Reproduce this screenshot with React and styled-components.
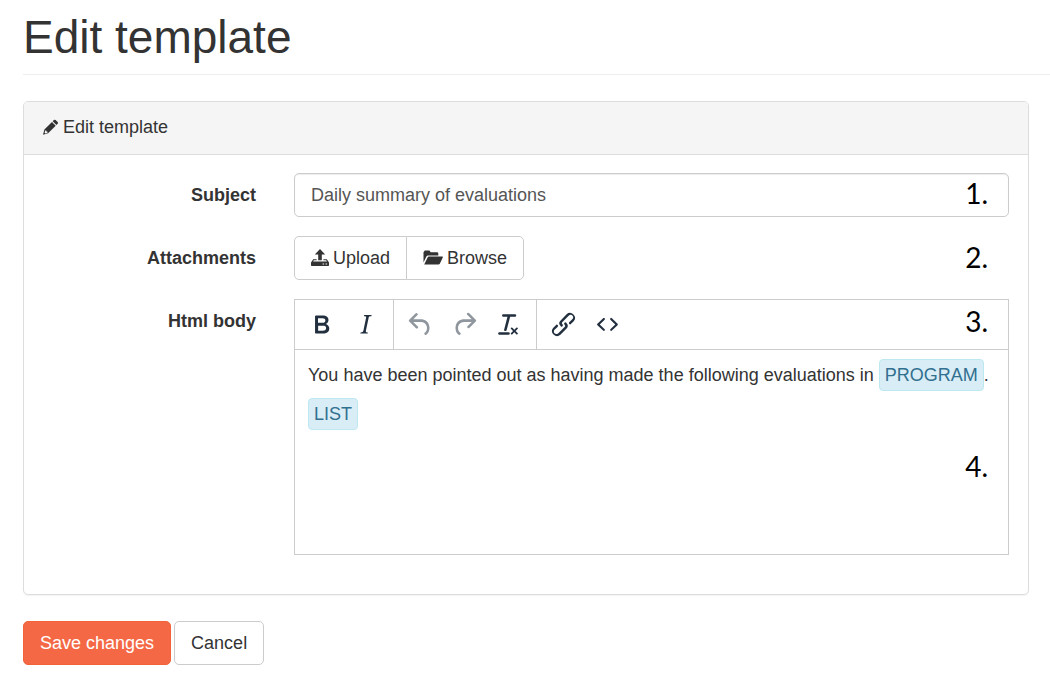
import React from 'react';
import styled, { createGlobalStyle } from 'styled-components';

const GlobalStyle = createGlobalStyle`
  *, *::before, *::after { box-sizing: border-box; }
  body {
    margin: 0;
    background: #fff;
    color: #333;
    font: 18px/26px "Liberation Sans", Arial, sans-serif;
  }
`;

const Page = styled.div`
  padding: 12px 0 28px 23px;
`;

const PageHeader = styled.header`
  padding-bottom: 12px;
  margin-bottom: 26px;
  border-bottom: 1px solid #eee;
`;

const Title = styled.h1`
  margin: 0;
  font-size: 46px;
  font-weight: 400;
  line-height: 50px;
`;

const Form = styled.form`
  margin-right: 21px;
`;

const Panel = styled.section`
  border: 1px solid #ddd;
  border-radius: 5px;
  box-shadow: 0 1px 1px rgba(0, 0, 0, 0.05);
  margin-bottom: 26px;
`;

const PanelHeading = styled.h2`
  display: flex;
  align-items: center;
  gap: 5px;
  margin: 0;
  padding: 12px 19px 14px;
  background: #f5f5f5;
  border-bottom: 1px solid #ddd;
  border-radius: 4px 4px 0 0;
  font-size: 18px;
  font-weight: 400;
  line-height: 26px;
`;

const PanelBody = styled.div`
  display: flex;
  flex-direction: column;
  gap: 19px;
  padding: 18px 19px 39px;
`;

const Row = styled.div`
  display: grid;
  grid-template-columns: 213px minmax(0, 1fr);
  column-gap: 38px;
  align-items: start;
`;

const Label = styled.label`
  padding-top: 9px;
  font-weight: 700;
  text-align: right;
`;

const Field = styled.div`
  position: relative;
`;

const Marker = styled.span`
  position: absolute;
  top: ${(p) => p.$top}px;
  right: 21px;
  color: #000;
  font: 28px/34px Lato, sans-serif;
  pointer-events: none;
`;

const TextInput = styled.input`
  display: block;
  width: 100%;
  height: 44px;
  padding: 8px 16px;
  border: 1px solid #ccc;
  border-radius: 5px;
  box-shadow: inset 0 1px 1px rgba(0, 0, 0, 0.075);
  color: #555;
  font: inherit;
`;

const Glyph = styled.svg`
  flex: none;
  width: ${(p) => p.$width}px;
  height: 18px;
  fill: currentColor;
`;

const Button = styled.button`
  display: inline-flex;
  align-items: center;
  justify-content: center;
  gap: 4px;
  height: 44px;
  padding: 0 16px;
  border: 1px solid ${(p) => (p.$primary ? '#f26339' : '#ccc')};
  border-radius: 5px;
  background: ${(p) => (p.$primary ? '#f46845' : '#fff')};
  color: ${(p) => (p.$primary ? '#fff' : '#333')};
  font: inherit;
  cursor: pointer;
`;

const ButtonGroup = styled.div`
  display: flex;

  ${Button}:not(:first-child) {
    margin-left: -1px;
    border-top-left-radius: 0;
    border-bottom-left-radius: 0;
  }

  ${Button}:not(:last-child) {
    border-top-right-radius: 0;
    border-bottom-right-radius: 0;
  }
`;

const Editor = styled.div`
  border: 1px solid #ccc;
`;

const Toolbar = styled.div`
  display: flex;
  height: 50px;
  border-bottom: 1px solid #ccc;
`;

const ToolGroup = styled.div`
  display: flex;
  align-items: center;
  padding: 0 6px 0 4px;

  & + & {
    border-left: 1px solid #ccc;
  }
`;

const ToolButton = styled.button`
  display: flex;
  align-items: center;
  justify-content: center;
  width: 44px;
  height: 44px;
  padding: 0;
  border: 0;
  background: none;
  color: #222f3e;
  opacity: ${(p) => (p.disabled ? 0.5 : 1)};

  svg {
    width: 31px;
    height: 31px;
    fill: currentColor;
  }
`;

const Content = styled.div`
  height: 204px;
  padding: 6px 13px;
  outline: none;
`;

const Paragraph = styled.p`
  margin: 0;
  line-height: 39px;
`;

const Tag = styled.span`
  display: inline-block;
  padding: 2px 5px;
  border: 1px solid #bce8f1;
  border-radius: 4px;
  background: #d9edf7;
  color: #31708f;
  line-height: 26px;
`;

const Actions = styled.div`
  display: flex;
  gap: 3px;
`;

const ICONS = {
  bold: 'M7.8 19c-.3 0-.5 0-.6-.2l-.2-.5V5.7c0-.2 0-.4.2-.5l.6-.2h5c1.5 0 2.7.3 3.5 1 .7.6 1.1 1.4 1.1 2.5a3 3 0 0 1-.6 1.9c-.4.6-1 1-1.6 1.2.4.1.9.3 1.3.6s.8.7 1 1.2c.4.4.5 1 .5 1.6 0 1.3-.4 2.3-1.3 3-.8.7-2.1 1-3.8 1H7.8zm5-8.3c.6 0 1.2-.1 1.6-.5.4-.3.6-.7.6-1.3 0-1.1-.8-1.7-2.3-1.7H9.3v3.5h3.4zm.5 6c.7 0 1.3-.1 1.7-.4.4-.4.6-.9.6-1.5s-.2-1-.7-1.4c-.4-.3-1-.4-2-.4H9.4v3.8h4z',
  italic: 'M16.7 4.7l-.1.9h-.3c-.6 0-1 0-1.4.3-.3.3-.4.6-.5 1.1l-2.1 9.8v.6c0 .5.4.8 1.4.8h.2l-.2.8H8l.2-.8h.2c1.1 0 1.8-.5 2-1.5l2-9.8.1-.5c0-.6-.4-.8-1.4-.8h-.3l.2-.9h5.8z',
  undo: 'M6.4 8H12c3.7 0 6.2 2 6.8 5.1.6 2.7-.4 5.6-2.3 6.8a1 1 0 0 1-1-1.8c1.1-.6 1.8-2.7 1.4-4.6-.5-2.1-2.1-3.5-4.9-3.5H6.4l3.3 3.3a1 1 0 1 1-1.4 1.4l-5-5a1 1 0 0 1 0-1.4l5-5a1 1 0 0 1 1.4 1.4L6.4 8z',
  redo: 'M17.6 10H12c-2.8 0-4.4 1.4-4.9 3.5-.4 2 .3 4 1.4 4.6a1 1 0 1 1-1 1.8c-2-1.2-2.9-4.1-2.3-6.8.6-3 3-5.1 6.8-5.1h5.6l-3.3-3.3a1 1 0 1 1 1.4-1.4l5 5a1 1 0 0 1 0 1.4l-5 5a1 1 0 0 1-1.4-1.4l3.3-3.3z',
  clear: 'M13.2 6a1 1 0 0 1 0 .2l-2.6 10a1 1 0 0 1-1 .8h-.2a.8.8 0 0 1-.8-1l2.6-10H8a1 1 0 1 1 0-2h9a1 1 0 0 1 0 2h-3.8zM5 18h7a1 1 0 0 1 0 2H5a1 1 0 0 1 0-2zm13 1.5L16.5 18 15 19.5a.7.7 0 0 1-1-1l1.5-1.5-1.5-1.5a.7.7 0 0 1 1-1l1.5 1.5 1.5-1.5a.7.7 0 0 1 1 1L17.5 17l1.5 1.5a.7.7 0 0 1-1 1z',
  link: 'M6.2 12.3a1 1 0 0 1 1.4 1.4l-2.1 2a2 2 0 1 0 2.7 2.8l4.8-4.8a1 1 0 0 0 0-1.4 1 1 0 1 1 1.4-1.3 2.9 2.9 0 0 1 0 4L9.6 20a3.9 3.9 0 0 1-5.5-5.5l2-2zm11.6-.6a1 1 0 0 1-1.4-1.4l2-2a2 2 0 1 0-2.6-2.8L11 10.3a1 1 0 0 0 0 1.4A1 1 0 1 1 9.6 13a2.9 2.9 0 0 1 0-4L14.4 4a3.9 3.9 0 0 1 5.5 5.5l-2 2z',
  code: 'M9.8 15.7c.3.3.3.8 0 1-.3.4-.9.4-1.2 0l-4.4-4.1a.8.8 0 0 1 0-1.2l4.4-4.2c.3-.3.9-.3 1.2 0 .3.3.3.8 0 1.1L6 12l3.8 3.7zM14.2 15.7c-.3.3-.3.8 0 1 .4.4.9.4 1.2 0l4.4-4.1c.3-.3.3-.8 0-1.2l-4.4-4.2a.8.8 0 0 0-1.2 0c-.3.3-.3.8 0 1.1L18 12l-3.8 3.7z',
};

const TOOLS = [
  [
    { icon: 'bold', label: 'Bold' },
    { icon: 'italic', label: 'Italic' },
  ],
  [
    { icon: 'undo', label: 'Undo', disabled: true },
    { icon: 'redo', label: 'Redo', disabled: true },
    { icon: 'clear', label: 'Clear formatting' },
  ],
  [
    { icon: 'link', label: 'Insert link' },
    { icon: 'code', label: 'Source code' },
  ],
];

const PencilIcon = () => (
  <Glyph $width={15} viewBox="0 0 15 18" aria-hidden="true">
    <path d="M10.9 2.1a1.2 1.2 0 0 1 1.7 0l2 2a1.2 1.2 0 0 1 0 1.7l-1.2 1.2-3.7-3.7z" />
    <path
      fillRule="evenodd"
      d="M9 4l3.7 3.7-7.6 7.6L0 16.7l1.4-5.1zM2.2 12.5l-.6 2.3.7.6 2.2-.6.1-1.1-1.2-.1-.1-1.2z"
    />
  </Glyph>
);

const UploadIcon = () => (
  <Glyph $width={18} viewBox="0 0 18 18" aria-hidden="true">
    <path d="M9 0l5.2 5.6h-3.4v5.6H7.2V5.6H3.8z" />
    <path
      fillRule="evenodd"
      d="M2.2 10.2h3.4v1H2.8l-.7 1.4h13.8l-.7-1.4h-2.8v-1h3.4l2.2 3.2v2.9a.7.7 0 0 1-.7.7H.7a.7.7 0 0 1-.7-.7v-2.9zM11.6 14.4v1.2h1.5v-1.2zM14.6 14.4v1.2h1.5v-1.2z"
    />
  </Glyph>
);

const FolderIcon = () => (
  <Glyph $width={20} viewBox="0 0 20 18" aria-hidden="true">
    <path d="M.5 13.6V3.2L1.8 1.4h4.6l1.3 1.8h6.4a1.2 1.2 0 0 1 1.2 1.2v2H5.2a2 2 0 0 0-1.8 1.1z" />
    <path d="M5.8 7.6h13.4c.5 0 .8.4.6.9l-3 6.3a1.5 1.5 0 0 1-1.3.8H1.2l3.4-7.2a1.4 1.4 0 0 1 1.2-.8z" />
  </Glyph>
);

export default function App() {
  return (
    <Page>
      <GlobalStyle />
      <PageHeader>
        <Title>Edit template</Title>
      </PageHeader>
      <Form onSubmit={(e) => e.preventDefault()}>
        <Panel>
          <PanelHeading>
            <PencilIcon />
            Edit template
          </PanelHeading>
          <PanelBody>
            <Row>
              <Label htmlFor="subject">Subject</Label>
              <Field>
                <TextInput id="subject" type="text" defaultValue="Daily summary of evaluations" />
                <Marker $top={3}>1.</Marker>
              </Field>
            </Row>
            <Row>
              <Label as="span" id="attachments-label">Attachments</Label>
              <Field>
                <ButtonGroup role="group" aria-labelledby="attachments-label">
                  <Button type="button">
                    <UploadIcon />
                    Upload
                  </Button>
                  <Button type="button">
                    <FolderIcon />
                    Browse
                  </Button>
                </ButtonGroup>
                <Marker $top={4}>2.</Marker>
              </Field>
            </Row>
            <Row>
              <Label as="span" id="body-label">Html body</Label>
              <Field>
                <Editor>
                  <Toolbar role="toolbar" aria-label="Formatting">
                    {TOOLS.map((group) => (
                      <ToolGroup key={group[0].icon}>
                        {group.map((tool) => (
                          <ToolButton
                            key={tool.icon}
                            type="button"
                            aria-label={tool.label}
                            disabled={tool.disabled}
                          >
                            <svg viewBox="0 0 24 24" aria-hidden="true">
                              <path fillRule="evenodd" d={ICONS[tool.icon]} />
                            </svg>
                          </ToolButton>
                        ))}
                      </ToolGroup>
                    ))}
                  </Toolbar>
                  <Content
                    role="textbox"
                    aria-multiline="true"
                    aria-labelledby="body-label"
                    contentEditable
                    suppressContentEditableWarning
                  >
                    <Paragraph>
                      You have been pointed out as having made the following evaluations in <Tag>PROGRAM</Tag>.
                    </Paragraph>
                    <Paragraph>
                      <Tag>LIST</Tag>
                    </Paragraph>
                  </Content>
                </Editor>
                <Marker $top={5}>3.</Marker>
                <Marker $top={150}>4.</Marker>
              </Field>
            </Row>
          </PanelBody>
        </Panel>
        <Actions>
          <Button type="submit" $primary>Save changes</Button>
          <Button type="button">Cancel</Button>
        </Actions>
      </Form>
    </Page>
  );
}
